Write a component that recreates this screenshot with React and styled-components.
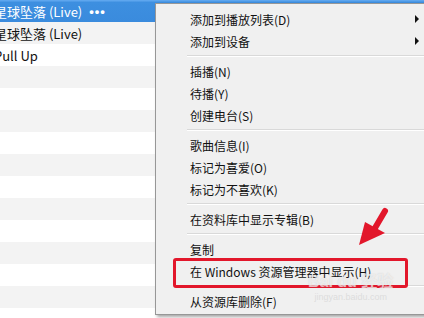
import React from 'react';
import styled, { createGlobalStyle } from 'styled-components';

const GlobalStyle = createGlobalStyle`
	body {
		margin: 0;
		background: #fff;
		font-family: "Noto Sans CJK SC", "Liberation Sans", sans-serif;
	}
`

const Screen = styled.div`
	position: relative;
	width: 424px;
	height: 318px;
	overflow: hidden;
	background: #fff;
`

const TrackList = styled.div`
	display: flex;
	flex-direction: column;
	margin-left: -6px;
`

const rowBg = {
	selected: 'linear-gradient(#5ea6ee 0, #5ea6ee 1px, #3d8fe0 2px, #3a8bdd 100%)',
	odd: '#f3f3f3',
	even: '#fff',
}

const TrackRow = styled.div`
	height: 22px;
	display: flex;
	align-items: center;
	gap: 6px;
	font-size: 13px;
	white-space: nowrap;
	color: ${props => props.$tone === 'selected' ? '#fff' : '#111'};
	background: ${props => rowBg[props.$tone]};
`

const Dots = styled.span`
	font-family: "Liberation Sans", sans-serif;
	font-size: 13px;
	font-weight: bold;
	letter-spacing: 1px;
	margin-left: 1px;
`

const ContextMenu = styled.div`
	position: absolute;
	left: 155px;
	top: 3px;
	width: 272px;
	box-sizing: border-box;
	padding: 4px 2px 2px;
	background: #f0f0f0;
	border: 1px solid #979797;
	box-shadow: 2px 2px 3px rgba(0, 0, 0, 0.35);
`

const MenuItem = styled.div`
	height: 22px;
	display: flex;
	align-items: center;
	justify-content: space-between;
	padding: 0 5px 0 32px;
	font-size: 12px;
	color: #111;
	white-space: nowrap;
`

const SubArrow = styled.span`
	width: 0;
	height: 0;
	border-top: 4px solid transparent;
	border-bottom: 4px solid transparent;
	border-left: 4px solid #111;
`

const Separator = styled.div`
	height: 8px;
	display: flex;
	align-items: center;
	margin-left: 29px;

	&::after {
		content: '';
		flex: 1;
		border-top: 1px solid #d9d9d9;
		border-bottom: 1px solid #fff;
	}
`

const Highlight = styled.div`
	position: absolute;
	left: 173px;
	top: 258px;
	width: 235px;
	height: 30px;
	box-sizing: border-box;
	border: 3px solid #e2172b;
	border-radius: 3px;
`

const Pointer = styled.svg`
	position: absolute;
	left: 350px;
	top: 200px;
`

const Watermark = styled.div`
	position: absolute;
	left: 308px;
	top: 273px;
	display: flex;
	flex-direction: column;
	align-items: center;
	color: rgba(255, 255, 255, 0.6);
	text-shadow: 0 0 1px rgba(170, 170, 170, 0.5);
	font-family: "Liberation Sans", "Noto Sans CJK SC", sans-serif;
	font-weight: bold;
	font-size: 16px;
	line-height: 18px;
	pointer-events: none;

	small {
		font-size: 9px;
		font-weight: normal;
		line-height: 12px;
		color: rgba(200, 200, 200, 0.5);
		text-shadow: none;
	}
`

const tracks = [
	{ title: '星球坠落 (Live)', more: true },
	{ title: '星球坠落 (Live)' },
	{ title: 'Pull Up' },
]

const menu = [
	{ label: '添加到播放列表(D)', sub: true },
	{ label: '添加到设备', sub: true },
	'-',
	{ label: '插播(N)' },
	{ label: '待播(Y)' },
	{ label: '创建电台(S)' },
	'-',
	{ label: '歌曲信息(I)' },
	{ label: '标记为喜爱(O)' },
	{ label: '标记为不喜欢(K)' },
	'-',
	{ label: '在资料库中显示专辑(B)' },
	'-',
	{ label: '复制' },
	{ label: '在 Windows 资源管理器中显示(H)' },
	'-',
	{ label: '从资源库删除(F)' },
]

const App = () => {
	const rows = Array.from({ length: 15 }, (_, i) => tracks[i] || { title: '' })

	return (
		<Screen>
			<GlobalStyle />
			<TrackList>
				{rows.map((t, i) => (
					<TrackRow key={i} $tone={i === 0 ? 'selected' : i % 2 ? 'odd' : 'even'}>
						<span>{t.title}</span>
						{t.more && <Dots>•••</Dots>}
					</TrackRow>
				))}
			</TrackList>

			<ContextMenu>
				{menu.map((m, i) => m === '-'
					? <Separator key={i} />
					: (
						<MenuItem key={i}>
							<span>{m.label}</span>
							{m.sub && <SubArrow />}
						</MenuItem>
					)
				)}
			</ContextMenu>

			<Highlight />
			<Pointer width="50" height="55" viewBox="0 0 50 55">
				<line x1="25" y1="28" x2="35" y2="11" stroke="#e2172b" strokeWidth="6" strokeLinecap="round" />
				<polygon points="9,45 15,22 35,33" fill="#e2172b" />
			</Pointer>
			<Watermark>
				<span>Bai du 经验</span>
				<small>jingyan.baidu.com</small>
			</Watermark>
		</Screen>
	)
}

export default App;
